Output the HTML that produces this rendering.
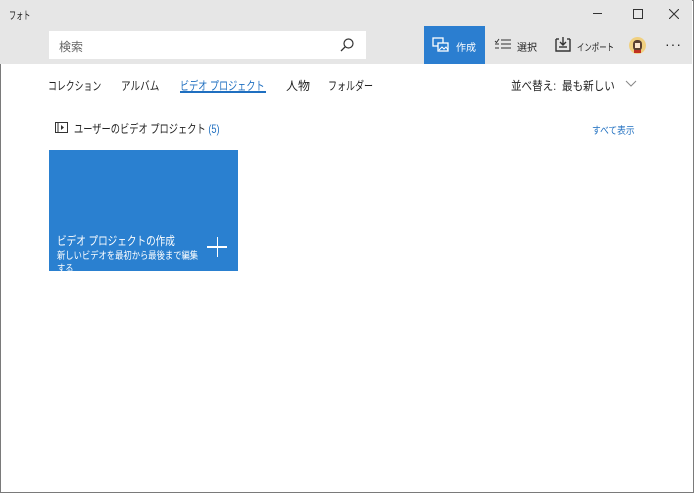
<!DOCTYPE html>
<html><head><meta charset="utf-8"><style>
*{margin:0;padding:0;box-sizing:border-box}
body{width:694px;height:493px;overflow:hidden;background:#fff;font-family:"Liberation Sans","Noto Sans CJK JP",sans-serif;position:relative;color:#222}
.win{position:absolute;left:0;top:0;width:694px;height:493px;border:1px solid #7a7a7a}
.hdr{position:absolute;left:0;top:0;width:692px;height:64px;background:#e6e6e6}
.t{position:absolute;white-space:nowrap;transform-origin:0 0}
.search{position:absolute;left:49px;top:31px;width:317px;height:28px;background:#fff}
.create{position:absolute;left:424px;top:26px;width:61px;height:38px;background:#2b7ed0}
.card{position:absolute;left:49px;top:150px;width:189px;height:121px;background:#2a80d0}
</style></head><body>
<div class="win"></div>
<div class="hdr"></div>
<div class="t" style="left:9px;top:7px;font-size:11px;transform:scaleX(0.65)">フォト</div>
<div style="position:absolute;left:593px;top:13px;width:9px;height:1px;background:#333"></div>
<div style="position:absolute;left:633px;top:9px;width:10px;height:10px;border:1px solid #333"></div>
<svg style="position:absolute;left:669px;top:9px" width="10" height="10" viewBox="0 0 10 10"><path d="M0 0L10 10M10 0L0 10" stroke="#333" stroke-width="1.1"/></svg>
<div class="search"></div>
<div class="t" style="left:59px;top:38px;font-size:12px;color:#666">検索</div>
<svg style="position:absolute;left:339px;top:37px" width="16" height="16" viewBox="0 0 16 16"><circle cx="9.5" cy="6.5" r="4.5" fill="none" stroke="#333" stroke-width="1.2"/><line x1="6.3" y1="9.7" x2="2" y2="14" stroke="#333" stroke-width="1.3"/></svg>
<div class="create"></div>
<svg style="position:absolute;left:432px;top:37px" width="18" height="16" viewBox="0 0 18 16"><rect x="1" y="1" width="10" height="8" fill="none" stroke="#fff" stroke-width="1.3"/><rect x="6" y="6" width="10" height="8" fill="#2b7ed0" stroke="#fff" stroke-width="1.3"/><path d="M7 13l3-3 2 2 2-2 2 3" fill="none" stroke="#fff"/></svg>
<div class="t" style="left:456px;top:39px;font-size:10px;color:#fff">作成</div>
<svg style="position:absolute;left:494px;top:38px" width="18" height="12" viewBox="0 0 18 12"><path d="M1 3l1.5 1.5L5 1" fill="none" stroke="#333"/><path d="M7 2h10M7 6h10M7 10h10M1 6h4M1 10h4" stroke="#333" stroke-width="1.1"/></svg>
<div class="t" style="left:517px;top:39px;font-size:10px">選択</div>
<svg style="position:absolute;left:555px;top:36px" width="16" height="16" viewBox="0 0 16 16"><path d="M1 3v12h14V3" fill="none" stroke="#333" stroke-width="1.4"/><line x1="1" y1="3" x2="4" y2="3" stroke="#333" stroke-width="1.4"/><line x1="12" y1="3" x2="15" y2="3" stroke="#333" stroke-width="1.4"/><path d="M8 1v8M5 6l3 3 3-3" fill="none" stroke="#333" stroke-width="1.4"/><line x1="4" y1="11" x2="12" y2="11" stroke="#333" stroke-width="1.4"/></svg>
<div class="t" style="left:577px;top:39px;font-size:10px;transform:scaleX(0.74)">インポート</div>
<div style="position:absolute;left:629px;top:37px;width:17px;height:17px;border-radius:50%;background:#f0d080"></div>
<div style="position:absolute;left:633px;top:40px;width:9px;height:11px;border-radius:4px;background:#5a4030"></div>
<div style="position:absolute;left:635px;top:43px;width:5px;height:5px;background:#fbe5cc"></div>
<div style="position:absolute;left:634px;top:50px;width:7px;height:3px;background:#c03020"></div>
<div class="t" style="left:665px;top:36px;font-size:14px;letter-spacing:1px">···</div>
<div class="t" style="left:48px;top:77px;font-size:12px;transform:scaleX(0.74)">コレクション</div>
<div class="t" style="left:121px;top:77px;font-size:12px;transform:scaleX(0.8)">アルバム</div>
<div class="t" style="left:180px;top:77px;font-size:12px;color:#1f6fc0;transform:scaleX(0.76)">ビデオ プロジェクト</div>
<div style="position:absolute;left:180px;top:91px;width:86px;height:2px;background:#1f6fc0"></div>
<div class="t" style="left:286px;top:77px;font-size:12px">人物</div>
<div class="t" style="left:328px;top:77px;font-size:12px;transform:scaleX(0.75)">フォルダー</div>
<div class="t" style="left:511px;top:77px;font-size:12px;transform:scaleX(0.88)">並べ替え:&nbsp; 最も新しい</div>
<svg style="position:absolute;left:625px;top:80px" width="12" height="8" viewBox="0 0 12 8"><path d="M1 1l5 5 5-5" fill="none" stroke="#888"/></svg>
<svg style="position:absolute;left:55px;top:122px" width="13" height="11" viewBox="0 0 13 11"><rect x="0.5" y="0.5" width="12" height="10" fill="none" stroke="#333"/><line x1="3" y1="0" x2="3" y2="11" stroke="#333"/><path d="M6 3v5l3-2.5z" fill="#333"/></svg>
<div class="t" style="left:74px;top:120px;font-size:12px;transform:scaleX(0.77)">ユーザーのビデオ プロジェクト <span style="color:#1f6fc0">(5)</span></div>
<div class="t" style="left:592px;top:122px;font-size:10px;color:#1f6fc0;transform:scaleX(0.87)">すべて表示</div>
<div class="card"></div>
<div class="t" style="left:57px;top:232px;font-size:12px;color:#fff;transform:scaleX(0.8)">ビデオ プロジェクトの作成</div>
<div class="t" style="left:57px;top:247px;font-size:10px;color:#fff;transform:scaleX(0.83)">新しいビデオを最初から最後まで編集</div>
<div class="t" style="left:57px;top:260px;font-size:10px;color:#fff;transform:scaleX(0.83)">する</div>
<div style="position:absolute;left:207px;top:246px;width:20px;height:1.5px;background:#fff"></div>
<div style="position:absolute;left:216.5px;top:237px;width:1.5px;height:20px;background:#fff"></div>
</body></html>
